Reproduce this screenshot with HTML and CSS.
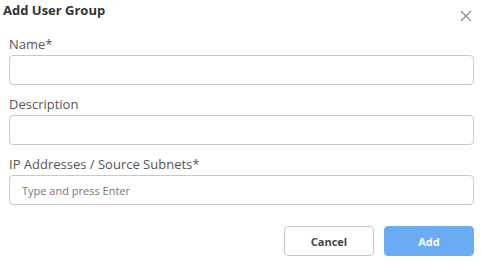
FILE: index.html
```html
<!DOCTYPE html>
<html lang="en">
  <head>
    <meta charset="UTF-8" />
    <meta name="viewport" content="width=device-width, initial-scale=1.0" />
    <title>Add User Group</title>
    <link rel="stylesheet" href="styles.css">
  </head>
  <body>
    <div class="modal">
      <div class="modal-header">
        <h2>Add User Group</h2>
        <span class="close">
          <svg width="12" height="12" viewBox="0 0 12 12">
            <path d="M1 1 L11 11 M11 1 L1 11" stroke="#888" stroke-width="1.2" fill="none" />
          </svg>
        </span>
      </div>

      <div class="form">
        <div class="field">
          <label for="groupName">Name*</label>
          <input type="text" id="groupName" />
        </div>
        <div class="field">
          <label for="groupDesc">Description</label>
          <input type="text" id="groupDesc" />
        </div>
        <div class="field">
          <label for="groupIps">IP Addresses / Source Subnets*</label>
          <input type="text" id="groupIps" placeholder="Type and press Enter" />
        </div>
      </div>

      <div class="actions">
        <button class="btn btn-cancel">Cancel</button>
        <button class="btn btn-add">Add</button>
      </div>
    </div>
  </body>
</html>
```

FILE: styles.css
```css
body {
  font-family: "Open Sans", "Liberation Sans", sans-serif;
  margin: 0;
  background-color: #ffffff;
  color: #333;
}
.modal {
  width: 481px;
  height: 264px;
  box-sizing: border-box;
  padding: 0 7px 0 9px;
}
.modal-header {
  display: flex;
  justify-content: space-between;
  align-items: center;
  height: 30px;
  margin-left: -6px;
  margin-right: 2px;
}
.modal-header h2 {
  margin: 0;
  font-size: 13px;
  font-weight: bold;
  color: #333;
  position: relative;
  top: -5px;
}
.close {
  display: flex;
  cursor: pointer;
  position: relative;
  top: 1px;
}
.field {
  display: flex;
  flex-direction: column;
}
.field label {
  font-size: 13px;
  color: #555;
  line-height: 16px;
  margin-top: 6px;
  margin-bottom: 3px;
}
.field input {
  height: 30px;
  box-sizing: border-box;
  border: 1px solid #c8c8c8;
  border-radius: 4px;
  padding: 0 12px;
  font-family: inherit;
  font-size: 11px;
  color: #333;
  margin-bottom: 5px;
}
.field input::placeholder {
  color: #777;
}
.actions {
  display: flex;
  justify-content: flex-end;
  gap: 10px;
  margin-top: 16px;
}
.btn {
  width: 90px;
  height: 30px;
  border-radius: 4px;
  font-family: inherit;
  font-size: 11px;
  font-weight: bold;
  cursor: pointer;
}
.btn-cancel {
  background-color: #ffffff;
  border: 1px solid #c8c8c8;
  color: #444;
}
.btn-add {
  background-color: #6aacf4;
  border: 1px solid #6aacf4;
  color: #ffffff;
}
```
